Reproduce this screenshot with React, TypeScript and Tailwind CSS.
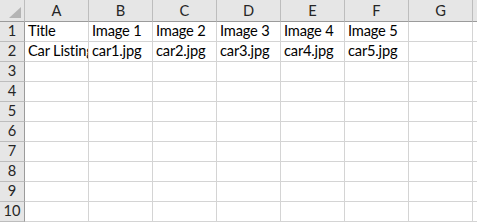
import React from "react";

const cols = ["A", "B", "C", "D", "E", "F", "G", ""];
const data: Record<number, string[]> = {
  1: ["Title", "Image 1", "Image 2", "Image 3", "Image 4", "Image 5", "", ""],
  2: ["Car Listing", "car1.jpg", "car2.jpg", "car3.jpg", "car4.jpg", "car5.jpg", "", ""],
};

export default function App() {
  const rows = [1, 2, 3, 4, 5, 6, 7, 8, 9, 10];
  return (
    <div
      className="w-[477px] h-[222px] overflow-hidden bg-white text-black"
      style={{ fontFamily: "Lato, 'Open Sans', sans-serif" }}
    >
      <div className="grid grid-cols-[25px_repeat(7,64px)_64px] grid-rows-[22px_repeat(10,20px)] w-[537px]">
        <div className="bg-[#e6e6e6] border-r border-b border-r-[#bdbdbd] border-b-[#9b9b9b] relative">
          <svg className="absolute right-[3px] bottom-[3px]" width="12" height="11" viewBox="0 0 12 11">
            <polygon points="12,0 12,11 0,11" fill="#b4b4b4" />
          </svg>
        </div>
        {cols.map((c, i) => (
          <div
            key={"h" + i}
            className="bg-[#e6e6e6] border-r border-b border-r-[#bdbdbd] border-b-[#9b9b9b] flex items-end justify-center pb-[1px] text-[14.67px] leading-[18px] text-[#262626]"
          >
            {c}
          </div>
        ))}
        {rows.map((r) => (
          <React.Fragment key={r}>
            <div className="bg-[#e6e6e6] border-r border-b border-r-[#9b9b9b] border-b-[#bdbdbd] flex items-end justify-center pb-[1px] text-[14.67px] leading-[18px] text-[#262626]">
              {r}
            </div>
            {cols.map((_, i) => (
              <div
                key={i}
                className="border-r border-b border-[#d4d4d4] flex items-end pl-[3px] pb-[1px] text-[14.67px] leading-[18px] tracking-[-0.2px] whitespace-nowrap overflow-hidden"
              >
                {data[r]?.[i] ?? ""}
              </div>
            ))}
          </React.Fragment>
        ))}
      </div>
    </div>
  );
}
